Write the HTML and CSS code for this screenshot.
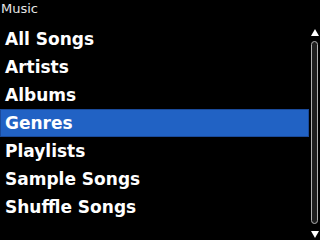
FILE: index.html
```html
<!DOCTYPE html>
<html>
<head>
<meta charset="utf-8">
<link rel="stylesheet" href="styles.css">
</head>
<body>
<div class="screen">
  <div class="title">Music</div>
  <div class="main">
    <ul class="list">
      <li class="item">All Songs</li>
      <li class="item">Artists</li>
      <li class="item">Albums</li>
      <li class="item selected">Genres</li>
      <li class="item">Playlists</li>
      <li class="item">Sample Songs</li>
      <li class="item">Shuffle Songs</li>
    </ul>
    <div class="scroll">
      <div class="arrow up"></div>
      <div class="track"></div>
      <div class="arrow down"></div>
    </div>
  </div>
</div>
</body>
</html>
```
FILE: styles.css
```css
html, body {
  margin: 0;
  padding: 0;
  background: #000;
}
.screen {
  width: 320px;
  height: 240px;
  background: #000;
  font-family: "DejaVu Sans", sans-serif;
  overflow: hidden;
  position: relative;
}
.title {
  height: 25px;
  padding-left: 1px;
  font-size: 13px;
  line-height: 17px;
  color: #e6e6e6;
}
.main {
  display: flex;
}
.list {
  list-style: none;
  margin: 0;
  padding: 0;
  width: 309px;
}
.item {
  height: 28px;
  line-height: 28px;
  padding-left: 5px;
  font-size: 17px;
  font-weight: bold;
  color: #fff;
  box-sizing: border-box;
}
.item.selected {
  background: #2162c4;
  box-shadow: inset 0 0 0 1px #1a4a9a;
}
.scroll {
  position: absolute;
  left: 311px;
  top: 28px;
  width: 7px;
  height: 210px;
  display: flex;
  flex-direction: column;
  align-items: center;
}
.arrow {
  width: 0;
  height: 0;
  border-left: 4px solid transparent;
  border-right: 4px solid transparent;
}
.arrow.up {
  border-bottom: 7px solid #fff;
  margin-top: 1px;
}
.arrow.down {
  border-top: 7px solid #fff;
}
.track {
  width: 7px;
  box-sizing: border-box;
  height: 183px;
  margin: 5px 0 7px;
  border: 1px solid #b0b0b0;
  border-radius: 4px 4px 4px 4px;
  background: #1e1e1e;
}
```
